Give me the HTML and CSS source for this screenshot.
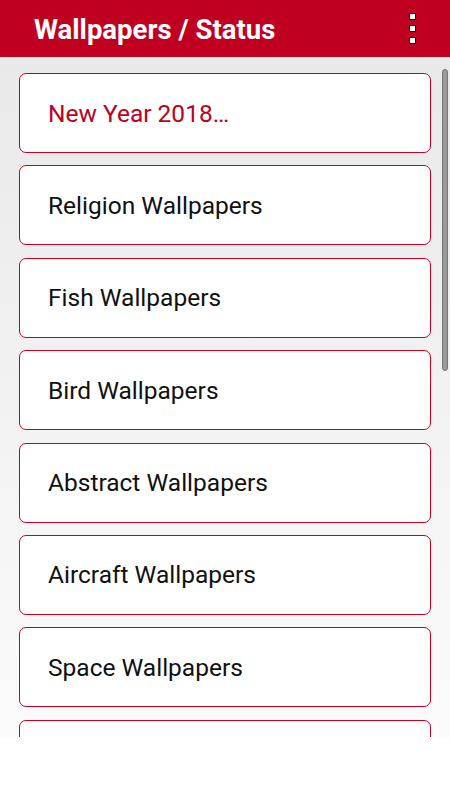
FILE: index.html
```html
<!doctype html>
<html>
<head>
<meta charset="utf-8">
<link rel="stylesheet" href="styles.css">
<title>Wallpapers / Status</title>
</head>
<body>
<div class="app">
	<div class="top_bar">
		<span class="title">Wallpapers / Status</span>
		<div class="menu">
			<i></i><i></i><i></i>
		</div>
	</div>
	<div class="list_box">
		<div class="list">
			<a class="item first">New Year 2018…</a>
			<a class="item">Religion Wallpapers</a>
			<a class="item">Fish Wallpapers</a>
			<a class="item">Bird Wallpapers</a>
			<a class="item">Abstract Wallpapers</a>
			<a class="item">Aircraft Wallpapers</a>
			<a class="item">Space Wallpapers</a>
			<a class="item"></a>
		</div>
		<div class="scroll"></div>
	</div>
	<div class="bottom"></div>
</div>
</body>
</html>
```

FILE: styles.css
```css
body{ margin:0; background:#fff; font-family:Roboto, "Liberation Sans", sans-serif;}
a{ display:block; text-decoration:none;}

.app{ width:450px; height:800px; display:flex; flex-direction:column;}

.top_bar{
	height:57px;
	background-color:#c00020;
	display:flex;
	align-items:center;
	padding-left:34px;
	padding-right:34px;
	flex-shrink:0;
}
.title{ font-size:27.5px; font-weight:bold; color:#fff; flex:1; padding-top:1px;}
.menu{ display:flex; flex-direction:column; gap:5px;}
.menu i{ display:block; width:5px; height:5px; background:#fff; border:1px solid #111;}

.list_box{
	height:680px;
	overflow:hidden;
	position:relative;
	background:linear-gradient(#e9e9e9, #fbfbfb);
	flex-shrink:0;
}
.list{ padding:16px 19px 0 19px; display:flex; flex-direction:column; gap:12.4px;}
.item{
	height:78px;
	background:#fff;
	border:1px solid #c8001e;
	border-radius:7px;
	padding-left:28px;
	display:flex;
	align-items:center;
	font-size:24.5px;
	color:#111;
}
.item.first{ color:#c00020;}

.scroll{
	position:absolute;
	right:2px;
	top:12px;
	width:4px;
	height:300px;
	border-radius:3px;
	background:#9a9a9a;
	border:1px solid #777;
}
.bottom{ flex:1; background:#fff;}
```
